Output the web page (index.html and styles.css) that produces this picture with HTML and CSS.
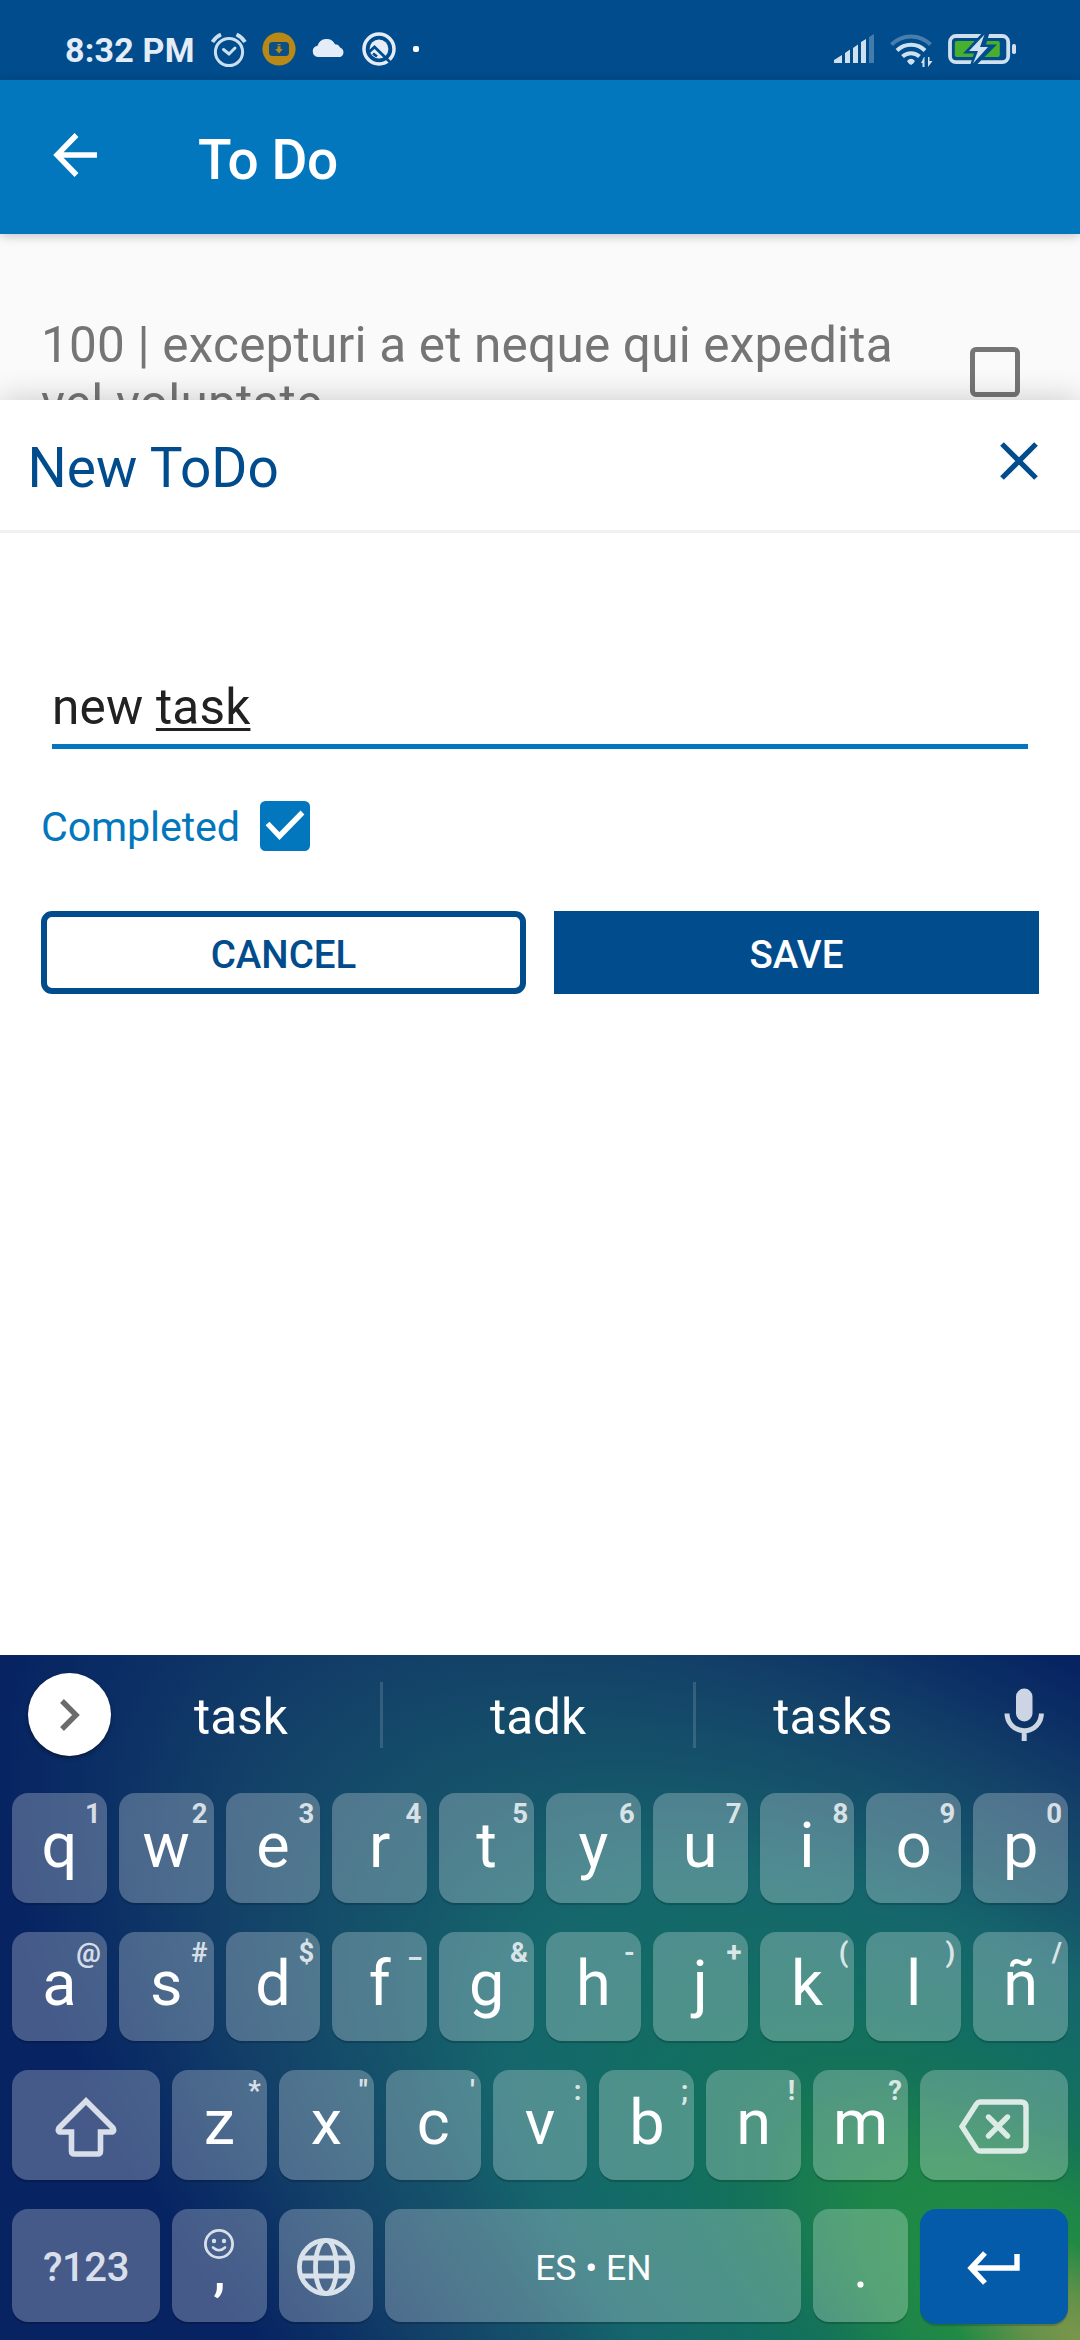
FILE: index.html
```html
<!DOCTYPE html>
<html lang="en">
<head>
<meta charset="utf-8">
<title>To Do</title>
<link rel="stylesheet" href="styles.css">
</head>
<body>
<div class="phone">
  <header class="status">
    <span class="time">8:32 PM</span>
    <svg class="status-left" viewBox="206 30 220 40" width="220" height="40">
      <g fill="none" stroke="#cbdff1" stroke-width="3">
        <circle cx="229" cy="52" r="13.6"/>
        <path d="M223.500 49.500l5.500 4.500 6-6" stroke-linecap="round"/>
        <path d="M212.500 42q3-5 8.500-7.500M245 42q-3-5-8.500-7.500" stroke-width="3.800"/>
      </g>
      <circle cx="279" cy="49" r="16.600" fill="#b88917"/>
      <rect x="269" y="42" width="20" height="14" rx="3.500" fill="#0b4f86"/>
      <path d="M277.500 44h3v1.200h-3zM277.500 46.200h3V49h2.300l-3.800 4.500-3.800-4.500h2.300z" fill="#b88917"/>
      <path d="M318 57a5.700 5.700 0 0 1-.5-11.300a9.500 9.500 0 0 1 17.500-1.500a5.800 5.800 0 0 1 5 3.200a5.200 5.200 0 0 1 .5 9.600z" fill="#e4edf7"/>
      <circle cx="379" cy="49" r="15" fill="none" stroke="#e4edf7" stroke-width="3.500"/>
      <circle cx="379" cy="49" r="9.400" fill="#e4edf7"/>
      <path d="M368.500 52.500L374.500 47L391 63M377 56.500l-4-3" fill="none" stroke="#004c8c" stroke-width="2.800"/>
      <rect x="413" y="46" width="6" height="6" rx="2" fill="#fff"/>
    </svg>
    <svg class="status-right" viewBox="832 30 186 40" width="186" height="40">
      <g fill="#cfe0ee">
        <path d="M834 63v-3l8-5v8zM845 63V53l5-3.500V63zM853 63V48l5-3.500V63zM861 63V42l5-3v24z"/>
        <path d="M869 63V37l5-3v29z" opacity=".32"/>
      </g>
      <g fill="none" stroke="#cfe0ee" stroke-width="4">
        <path d="M891.500 44.500A27.500 27.500 0 0 1 930.500 44.500" opacity=".34"/>
        <path d="M897 50.500A20 20 0 0 1 925 50.500"/>
        <path d="M902.500 56.500A12.500 12.500 0 0 1 919.500 56.500"/>
      </g>
      <path d="M907 61q4-4.500 8 0l-1.800 2.500-2.200 1.500-2.200-1.500z" fill="#cfe0ee"/>
      <path d="M924.500 57v10h-2v-4h-1.500l3-6zM928 67V57h1.500v4H932.500z" fill="#cfe0ee"/>
      <rect x="950" y="36" width="58.200" height="26.200" rx="6" fill="none" stroke="#d0e0ee" stroke-width="3.800"/>
      <rect x="954.800" y="41" width="45" height="16" rx="2" fill="#48b02c"/>
      <path d="M984 31L963 53.500h11L969.500 67l5 0L997 44.500H986L990 31z" fill="#004c8c"/>
      <path d="M984.500 34.500L969 51h9L973 63.500L988 47H980z" fill="#d0e0ee"/>
      <rect x="1012" y="44" width="4" height="10" rx="1.800" fill="#d0e0ee"/>
    </svg>
  </header>

  <div class="appbar">
    <svg class="back" viewBox="0 0 44 44" width="44" height="44"><path d="M23.500 2L4 22l19.500 20M4 22h40" fill="none" stroke="#fff" stroke-width="5.400"/></svg>
    <h1>To Do</h1>
  </div>

  <main class="list">
    <p class="item-text">100 | excepturi a et neque qui expedita vel voluptate</p>
    <span class="box"></span>
  </main>

  <section class="sheet">
    <div class="sheet-head">
      <h2>New ToDo</h2>
      <svg viewBox="0 0 38 38" width="38" height="38"><path d="M2 2l34 34M36 2L2 36" stroke="#004c8c" stroke-width="5.200"/></svg>
    </div>
    <div class="form">
      <div class="field">new <u>task</u></div>
      <div class="check-row">
        <span>Completed</span>
        <svg viewBox="0 0 50 50" width="50" height="50"><rect width="50" height="50" rx="5.500" fill="#0277bd"/><path d="M7.500 22.500L19.500 35 42.500 11.500" fill="none" stroke="#fff" stroke-width="5.400"/></svg>
      </div>
      <div class="buttons">
        <button class="btn cancel">CANCEL</button>
        <button class="btn save">SAVE</button>
      </div>
    </div>
  </section>

  <section class="keyboard">
    <div class="suggest">
      <span class="more"><svg viewBox="0 0 22 34" width="22" height="34"><path d="M3 3l14 14L3 31" fill="none" stroke="#6b6b6b" stroke-width="5.400"/></svg></span>
      <span class="word first">task</span>
      <span class="word">tadk</span>
      <span class="word last">tasks</span>
      <svg class="mic" viewBox="0 0 40 54" width="40" height="54"><rect x="12" y="0.500" width="16.500" height="33" rx="8.200" fill="#cdd4e3"/><path d="M3 25.500a17.200 17.200 0 0 0 34.400 0M20.200 42v11" fill="none" stroke="#cdd6e3" stroke-width="5"/></svg>
    </div>
    <div class="row">
      <span class="key">q<sup>1</sup></span><span class="key">w<sup>2</sup></span><span class="key">e<sup>3</sup></span><span class="key">r<sup>4</sup></span><span class="key">t<sup>5</sup></span><span class="key">y<sup>6</sup></span><span class="key">u<sup>7</sup></span><span class="key">i<sup>8</sup></span><span class="key">o<sup>9</sup></span><span class="key">p<sup>0</sup></span>
    </div>
    <div class="row">
      <span class="key">a<sup>@</sup></span><span class="key">s<sup>#</sup></span><span class="key">d<sup>$</sup></span><span class="key">f<sup class="low">_</sup></span><span class="key">g<sup>&amp;</sup></span><span class="key">h<sup>-</sup></span><span class="key">j<sup>+</sup></span><span class="key">k<sup>(</sup></span><span class="key">l<sup>)</sup></span><span class="key">ñ<sup>/</sup></span>
    </div>
    <div class="row">
      <span class="key wide"><svg viewBox="0 0 62 60" width="62" height="60"><path d="M31 4L4 31q-2 4 2 4h10.500v19q0 3 3 3h23q3 0 3-3V35H56q4 0 2-4z" fill="none" stroke="#d9dfea" stroke-width="5.600"/></svg></span><span class="key">z<sup>*</sup></span><span class="key">x<sup>"</sup></span><span class="key">c<sup>'</sup></span><span class="key">v<sup>:</sup></span><span class="key">b<sup>;</sup></span><span class="key">n<sup>!</sup></span><span class="key">m<sup>?</sup></span><span class="key wide"><svg class="erase" viewBox="0 0 70 55" width="70" height="55"><path d="M21 3h41q5 0 5 5v39q0 5-5 5H21q-2 0-3.500-2L3 27.500 17.500 5q1.500-2 3.500-2z" fill="none" stroke="#dcebe5" stroke-width="5.400"/><path d="M29.500 18l19 19M48.500 18l-19 19" stroke="#dcebe5" stroke-width="5.400" stroke-linecap="round"/></svg></span>
    </div>
    <div class="row bottom">
      <span class="key wide num">?123</span>
      <span class="key comma"><svg viewBox="0 0 30 30" width="30" height="30"><circle cx="15" cy="15" r="13.600" fill="none" stroke="#d9dfea" stroke-width="2.800"/><circle cx="10" cy="12" r="2.200" fill="#d9dfea"/><circle cx="20" cy="12" r="2.200" fill="#d9dfea"/><path d="M9 18.500q6 5.500 12 0" fill="none" stroke="#d9dfea" stroke-width="2.600" stroke-linecap="round"/></svg><b>,</b></span>
      <span class="key globe"><svg viewBox="0 0 60 60" width="60" height="60"><g fill="none" stroke="#d9e1ea" stroke-width="4.800"><circle cx="30" cy="30" r="26.600"/><ellipse cx="30" cy="30" rx="10.500" ry="26.600"/><path d="M5 21h50M5 39h50"/></g></svg></span>
      <span class="key space">ES • EN</span>
      <span class="key dot">.</span>
      <span class="key wide enter"><svg viewBox="0 0 54 34" width="54" height="34"><path d="M18 2L4 17l14 15M4 17h46V3" fill="none" stroke="#fff" stroke-width="5.400"/></svg></span>
    </div>
  </section>
</div>
</body>
</html>
```
FILE: styles.css
```css
* { box-sizing: border-box; margin: 0; padding: 0; }
body { background: #fff; font-family: Roboto, sans-serif; }
svg { display: block; flex: none; }

.phone {
  width: 1080px;
  height: 2340px;
  display: flex;
  flex-direction: column;
  overflow: hidden;
  background: #fafafa;
}

.status {
  height: 80px;
  background: #004c8c;
  display: flex;
  align-items: center;
  padding: 20px 62px 0 65px;
  flex: none;
}
.time { width: 141px; font-size: 34px; font-weight: 700; line-height: 40px; letter-spacing: .2px; color: #e4edf7; white-space: nowrap; }
.status-right { margin-left: auto; }

.appbar {
  height: 154px;
  background: #0277bd;
  display: flex;
  align-items: center;
  padding-left: 53px;
  gap: 101px;
  flex: none;
  box-shadow: 0 2px 10px rgba(0, 0, 0, .22);
  z-index: 1;
}
.back { margin-top: -4px; }
.appbar h1 { font-size: 55px; font-weight: 500; line-height: 64px; letter-spacing: -.4px; color: #fff; padding-top: 6px; }

.list {
  height: 166px;
  padding: 82px 60px 0 41px;
  display: flex;
  justify-content: space-between;
  flex: none;
}
.item-text { width: 870px; font-size: 49.5px; line-height: 58px; letter-spacing: .2px; color: #757575; }
.box { width: 50px; height: 50px; margin-top: 31px; border: 5.5px solid #757575; border-radius: 6px; }

.sheet {
  height: 1255px;
  background: #fff;
  flex: none;
  box-shadow: 0 0 30px rgba(0, 0, 0, .2);
  z-index: 1;
}
.sheet-head {
  height: 133px;
  border-bottom: 3px solid #f0f0f0;
  display: flex;
  justify-content: space-between;
  align-items: flex-start;
  padding: 36px 42px 0 27.5px;
}
.sheet-head h2 { font-size: 55px; font-weight: 400; line-height: 64px; color: #004c8c; }
.sheet-head svg { margin-top: 6px; }
.form { padding: 145px 41px 0; }
.field {
  height: 71px;
  margin: 0 11px;
  border-bottom: 5.5px solid #0277bd;
  font-size: 49.5px;
  line-height: 58px;
  letter-spacing: .2px;
  color: #212121;
}
.field u { text-decoration-thickness: 2.5px; text-underline-offset: 4px; text-decoration-skip-ink: none; }
.check-row { display: flex; align-items: center; gap: 20px; height: 50px; margin-top: 52px; font-size: 41.25px; line-height: 50px; letter-spacing: -.15px; color: #0277bd; }
.check-row span { padding-top: 1px; }
.buttons { display: flex; gap: 28px; margin-top: 60px; }
.btn {
  flex: 1;
  height: 83px;
  padding-top: 4px;
  font: 500 38.5px/44px Roboto, sans-serif;
  color: #004c8c;
  background: #fff;
  border: 6px solid #004c8c;
  border-radius: 11px;
}
.save { background: #004c8c; color: #fff; border-radius: 0; }

.keyboard {
  position: relative;
  height: 685px;
  flex: none;
  overflow: hidden;
  background: #072362;
  display: flex;
  flex-direction: column;
  padding: 0 12px;
  z-index: 2;
}
/* Aurora glow rising from the lower right corner */
.keyboard::before {
  content: "";
  position: absolute;
  left: -200px;
  top: 112px;
  width: 2560px;
  height: 1146px;
  transform: rotate(36deg);
  background: radial-gradient(closest-side, #7b964b 0, #63914a 6%, #208a45 14%, #1d8549 20%, #147358 30%, #126e62 38%, #15666c 53%, #15556a 63%, #134168 78%, #0b2e65 91%, #072362 100%);
}
.suggest, .row { position: relative; }
.suggest { height: 138px; display: flex; align-items: center; padding: 0 24px 12px 16px; color: #fff; font-size: 49.5px; flex: none; }
.more {
  width: 83px;
  height: 83px;
  margin-top: -7px;
  border-radius: 50%;
  background: #fff;
  display: flex;
  align-items: center;
  justify-content: center;
  box-shadow: 0 2px 4px rgba(0, 0, 0, .4);
}
.word { width: 313px; height: 66px; line-height: 71px; text-align: center; border-right: 3px solid rgba(255, 255, 255, .14); margin-top: -6px; }
.first { width: 272px; padding-right: 9px; }
.last { width: 274px; border: 0; }
.mic { margin: -6px 0 0 auto; }

.row { display: flex; gap: 12px; height: 109.500px; margin-bottom: 29px; flex: none; }
.key {
  position: relative;
  flex: 1 1 0;
  border-radius: 16px;
  background: rgba(255, 255, 255, .25);
  box-shadow: 0 2px 1px rgba(0, 0, 0, .18);
  color: #fff;
  font-size: 63px;
  display: flex;
  align-items: center;
  justify-content: center;
  padding-bottom: 5px;
}
.key sup { position: absolute; top: 4px; right: 6px; font-size: 27.5px; line-height: 34px; font-weight: 700; color: rgba(255, 255, 255, .8); }
.key .low { top: -1px; }
.wide { flex: 0 0 148px; padding-top: 9px; }
.bottom { height: 113px; margin-bottom: 0; }
.num { font-size: 40px; font-weight: 500; letter-spacing: -.4px; color: #d9dfea; padding-top: 10px; }
.globe { padding-top: 8px; }
.comma { flex-direction: column; justify-content: flex-start; padding-top: 20px; }
.comma b { font-weight: 500; font-size: 55px; line-height: 60px; margin-top: -19px; }
.space { flex: 0 0 416px; font-size: 35.5px; padding-top: 10px; }
.dot { padding-top: 11px; font-size: 55px; }
.enter { height: 115px; background: #045ba9; }
```
